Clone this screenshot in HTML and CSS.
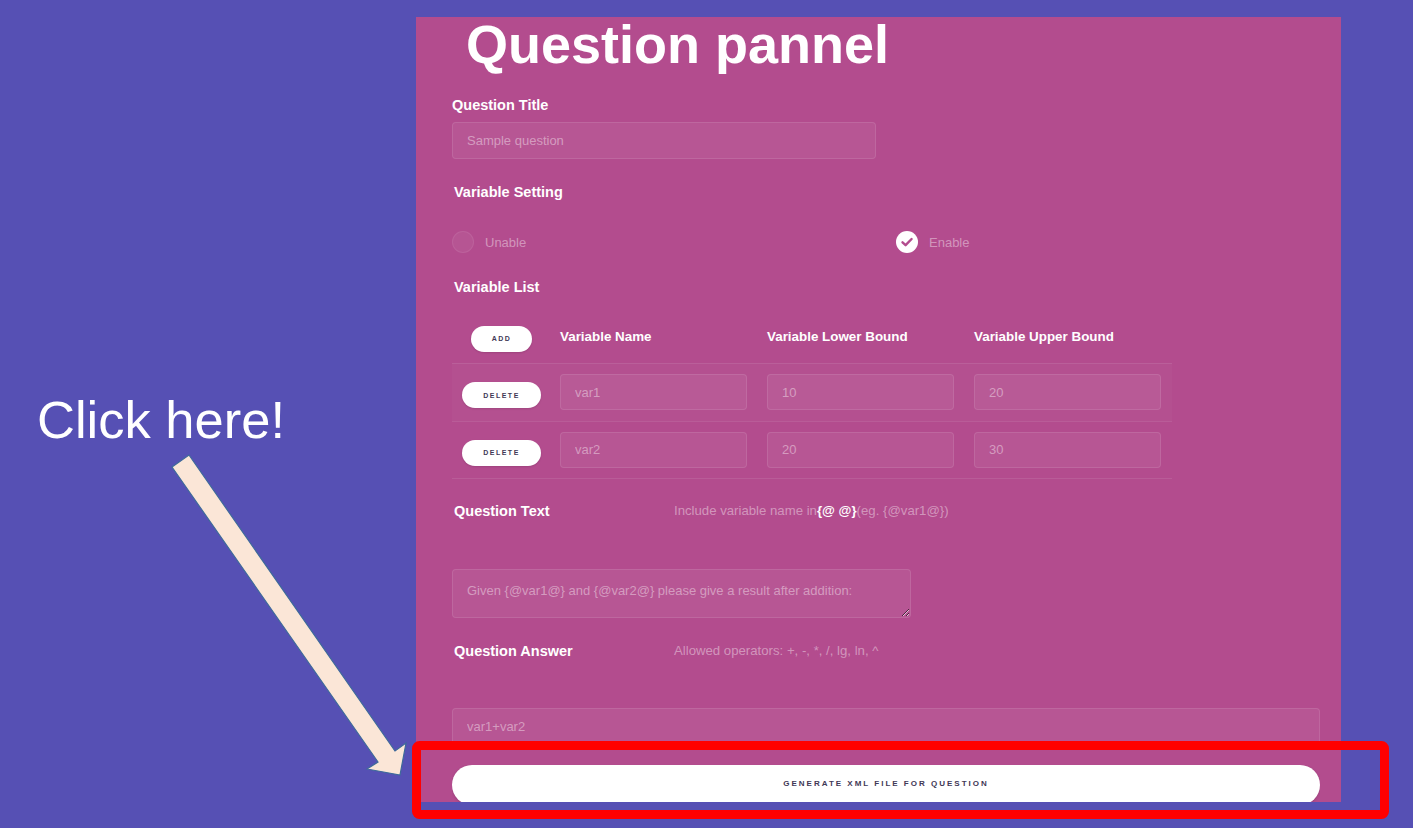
FILE: index.html
```html
<!DOCTYPE html>
<html>
<head>
<meta charset="utf-8">
<link rel="stylesheet" href="styles.css">
</head>
<body>
<div class="slide">
  <div class="side">
    <div class="callout">Click here!</div>
  </div>
  <div class="panel">
    <h1 class="title">Question pannel</h1>
    <div class="label lbl-title">Question Title</div>
    <input class="field field-title" placeholder="Sample question">
    <div class="label lbl-setting">Variable Setting</div>
    <div class="radios">
      <div class="radio"><span class="dot"></span><span class="rtext">Unable</span></div>
      <div class="radio"><span class="dot on"><svg viewBox="0 0 22 22" width="22" height="22"><path d="M6.5 11.3 L9.6 14.2 L15.6 8" fill="none" stroke="#b34c8e" stroke-width="2.4" stroke-linecap="round" stroke-linejoin="round"/></svg></span><span class="rtext">Enable</span></div>
    </div>
    <div class="label lbl-list">Variable List</div>
    <table class="vars">
      <tr class="head">
        <td class="c1"><button class="pill add">ADD</button></td>
        <td class="c2">Variable Name</td>
        <td class="c3">Variable Lower Bound</td>
        <td class="c4">Variable Upper Bound</td>
      </tr>
      <tr class="row r1">
        <td class="c1"><button class="pill del">DELETE</button></td>
        <td class="c2"><input class="field cell" value="var1"></td>
        <td class="c3"><input class="field cell" value="10"></td>
        <td class="c4"><input class="field cell" value="20"></td>
      </tr>
      <tr class="row r2">
        <td class="c1"><button class="pill del">DELETE</button></td>
        <td class="c2"><input class="field cell" value="var2"></td>
        <td class="c3"><input class="field cell" value="20"></td>
        <td class="c4"><input class="field cell" value="30"></td>
      </tr>
    </table>
    <div class="split lbl-qtext">
      <div class="label">Question Text</div>
      <div class="hint">Include variable name in<b>{@ @}</b>(eg. {@var1@})</div>
    </div>
    <textarea class="field area">Given {@var1@} and {@var2@} please give a result after addition:</textarea>
    <div class="split lbl-answer">
      <div class="label">Question Answer</div>
      <div class="hint">Allowed operators: +, -, *, /, lg, ln, ^</div>
    </div>
    <input class="field field-answer" value="var1+var2">
    <div class="actions">
      <button class="generate">GENERATE XML FILE FOR QUESTION</button>
    </div>
  </div>
  <svg class="overlay" width="1413" height="828" viewBox="0 0 1413 828">
    <polygon points="172,467 189,455 395,751 406,743 400,775 367,769 378,762" fill="#fbe6d7" stroke="#3e6a9a" stroke-width="1.2" stroke-linejoin="miter"/>
    <rect x="416.5" y="745.5" width="968" height="69" rx="3" fill="none" stroke="#ff0000" stroke-width="9"/>
  </svg>
</div>
</body>
</html>
```
FILE: styles.css
```css
* { box-sizing: border-box; }
html, body { margin: 0; padding: 0; }
body {
  background: #5650b4;
  font-family: "Liberation Sans", Arial, sans-serif;
  width: 1413px;
  height: 828px;
  overflow: hidden;
}
.slide {
  position: relative;
  display: flex;
  width: 1413px;
  height: 828px;
}
.side {
  width: 416px;
  flex: none;
  padding: 394px 0 0 37px;
}
.callout {
  color: #ffffff;
  font-size: 52.5px;
  line-height: 52px;
  white-space: nowrap;
}
.panel {
  flex: none;
  width: 925px;
  height: 785px;
  margin-top: 17px;
  background: #b34c8e;
  padding: 0 21px 0 36px;
  display: flex;
  flex-direction: column;
  align-items: flex-start;
}
.panel > * { flex: none; }
.title {
  margin: 0 0 0 14px;
  font-size: 54px;
  line-height: 54px;
  font-weight: bold;
  color: #ffffff;
  white-space: nowrap;
}
.label {
  color: #ffffff;
  font-weight: bold;
  font-size: 14.5px;
  line-height: 18px;
  white-space: nowrap;
}
.lbl-title { margin-top: 25px; }
.lbl-setting { margin-top: 24px; padding-left: 2px; }
.lbl-list { margin-top: 25px; padding-left: 2px; }
.field {
  display: block;
  background: rgba(255, 255, 255, 0.06);
  border: 1px solid rgba(255, 255, 255, 0.1);
  border-radius: 4px;
  color: rgba(255, 255, 255, 0.42);
  font-family: "Liberation Sans", Arial, sans-serif;
  font-size: 13px;
  padding: 0 14px;
  outline: none;
  margin: 0;
}
.field::placeholder { color: rgba(255, 255, 255, 0.42); }
.field-title {
  margin-top: 8px;
  width: 424px;
  height: 37px;
}
.radios {
  margin-top: 30px;
  display: grid;
  grid-template-columns: 444px 1fr;
  width: 100%;
  height: 22px;
}
.radio {
  display: flex;
  align-items: center;
  gap: 11px;
}
.dot {
  width: 22px;
  height: 22px;
  border-radius: 50%;
  background: rgba(255, 255, 255, 0.05);
  border: 1px solid rgba(255, 255, 255, 0.07);
  display: block;
}
.dot.on {
  background: #ffffff;
  border: none;
}
.dot svg { display: block; }
.rtext {
  color: rgba(255, 255, 255, 0.42);
  font-size: 13px;
}
.vars {
  margin-top: 19px;
  border-collapse: collapse;
  width: 720px;
  table-layout: fixed;
}
.vars td {
  padding: 0;
  vertical-align: middle;
}
.vars .c1 { width: 108px; text-align: center; padding-right: 9px; }
.vars .c2, .vars .c3 { width: 207px; }
.vars .c4 { width: 198px; }
.head { height: 48px; }
.head td {
  color: #ffffff;
  font-weight: bold;
  font-size: 13.4px;
  padding-bottom: 4px;
  white-space: nowrap;
}
.head td.c1 { padding-bottom: 0; }
.row.r1 {
  height: 58px;
  background: rgba(255, 255, 255, 0.025);
  border-top: 1px solid rgba(255, 255, 255, 0.09);
}
.row.r2 {
  height: 57px;
  border-top: 1px solid rgba(255, 255, 255, 0.09);
  border-bottom: 1px solid rgba(255, 255, 255, 0.09);
}
.cell {
  width: 187px;
  height: 36px;
}
.pill {
  background: #ffffff;
  border: none;
  border-radius: 13px;
  color: #3f3856;
  font-family: "Liberation Sans", Arial, sans-serif;
  font-weight: bold;
  font-size: 7px;
  letter-spacing: 1.5px;
  padding: 0;
  box-shadow: 0 1px 2px rgba(0, 0, 0, 0.12);
}
.pill.add { width: 61px; height: 26px; }
.pill.del { width: 79px; height: 26px; margin-top: 6px; }
.split {
  display: grid;
  grid-template-columns: 222px 1fr;
  width: 100%;
  align-items: center;
}
.split .label { padding-left: 2px; }
.lbl-qtext { margin-top: 23px; }
.lbl-answer { margin-top: 24px; }
.hint {
  color: rgba(255, 255, 255, 0.42);
  font-size: 13.2px;
  line-height: 16px;
  white-space: nowrap;
}
.hint b { color: #ffffff; }
.area {
  margin-top: 49px;
  width: 459px;
  height: 49px;
  padding-top: 13px;
  line-height: 16px;
  resize: both;
}
.field-answer {
  margin-top: 48px;
  width: 868px;
  height: 37px;
}
.actions {
  margin-top: 20px;
  width: 868px;
  height: 37px;
  overflow: hidden;
}
.generate {
  display: block;
  width: 868px;
  height: 40px;
  background: #ffffff;
  border: none;
  border-radius: 20px;
  color: #3f3856;
  font-family: "Liberation Sans", Arial, sans-serif;
  font-weight: bold;
  font-size: 8px;
  letter-spacing: 2px;
  padding: 0 0 2px 0;
  box-shadow: 0 1px 3px rgba(0, 0, 0, 0.15);
}
.overlay {
  position: absolute;
  left: 0;
  top: 0;
  pointer-events: none;
}
```
